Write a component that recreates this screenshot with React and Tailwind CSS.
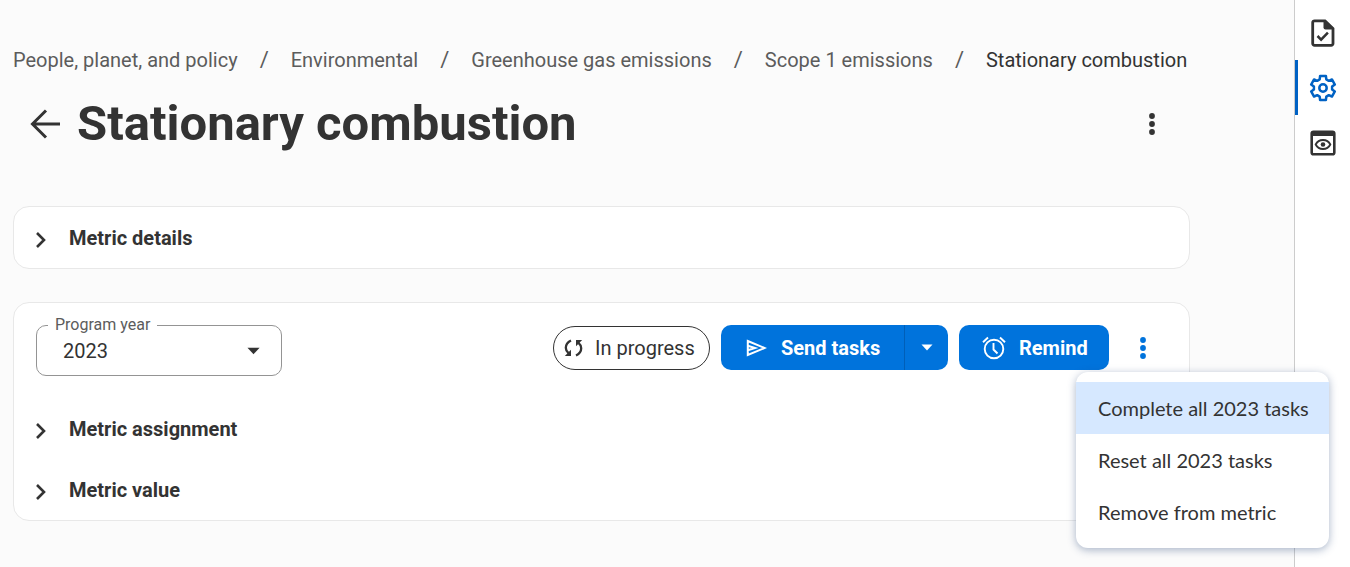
import React from "react";

const trail = ["People, planet, and policy", "Environmental", "Greenhouse gas emissions", "Scope 1 emissions"];
const menuItems = ["Complete all 2023 tasks", "Reset all 2023 tasks", "Remove from metric"];

function Kebab() {
  return (
    <svg width="8" height="24" viewBox="0 0 8 24" fill="currentColor" aria-hidden="true">
      <circle cx="4" cy="4" r="2.9" />
      <circle cx="4" cy="12" r="2.9" />
      <circle cx="4" cy="20" r="2.9" />
    </svg>
  );
}

function Caret() {
  return (
    <svg width="14" height="8" viewBox="0 0 14 8" fill="currentColor" aria-hidden="true">
      <path d="M0.5 0.5h13L7 7.5z" />
    </svg>
  );
}

function Section({ title }) {
  return (
    <h2>
      <button type="button" aria-expanded="false" className="flex h-[61px] w-full items-center gap-[23px] px-[22px] text-left text-[20px] leading-6 font-bold">
        <svg className="mt-1" width="10" height="16" viewBox="0 0 10 16" fill="none" stroke="currentColor" strokeWidth="2.6" aria-hidden="true">
          <path d="M1 1l7 7-7 7" />
        </svg>
        {title}
      </button>
    </h2>
  );
}

function TaskIcon() {
  return (
    <svg width="24" height="28" viewBox="0 0 24 28" fill="none" aria-hidden="true">
      <path d="M3.500 1.800h10.500L22 9.500v15a1.800 1.800 0 0 1-1.800 1.800H3.500a1.800 1.800 0 0 1-1.800-1.800V3.600A1.800 1.800 0 0 1 3.500 1.800z" stroke="currentColor" strokeWidth="2.800" />
      <path d="M12.500 1.500h2.500L22.500 9v1.500h-8a2 2 0 0 1-2-2z" fill="currentColor" />
      <path d="M6.500 17l3.600 3.600 6.800-7" stroke="currentColor" strokeWidth="2.500" />
    </svg>
  );
}

function GearIcon() {
  return (
    <svg width="28" height="28" viewBox="-14 -14 28 28" fill="none" stroke="currentColor" strokeWidth="2.500" strokeLinejoin="round" aria-hidden="true">
      <path d="M-3.300-8.600L-2.900-12H2.900L3.300-8.600L5.800-7.160L8.940-8.510L11.840-3.490L9.100-1.440V1.440L11.840 3.490L8.940 8.510L5.800 7.160L3.300 8.600L2.900 12H-2.900L-3.300 8.600L-5.800 7.160L-8.940 8.510L-11.840 3.490L-9.100 1.440V-1.440L-11.840-3.490L-8.940-8.510L-5.800-7.160z" />
      <circle r="3.700" />
    </svg>
  );
}

function PreviewIcon() {
  return (
    <svg width="26" height="26" viewBox="0 0 26 26" fill="none" stroke="currentColor" aria-hidden="true">
      <rect x="1.700" y="1.700" width="22.600" height="22.600" rx="1.800" strokeWidth="2.600" />
      <path d="M1.500 2.500h23v3.500h-23z" fill="currentColor" stroke="none" />
      <path d="M5.700 14.500c1.500-3 4.200-4.500 7.300-4.500s5.800 1.500 7.300 4.500c-1.500 3-4.200 4.500-7.300 4.500s-5.800-1.500-7.300-4.500z" strokeWidth="1.900" />
      <circle cx="13" cy="14.500" r="2.300" fill="currentColor" stroke="none" />
    </svg>
  );
}

export default function App() {
  return (
    <div className="flex min-h-screen bg-white font-['Roboto',sans-serif] text-[#333333]">
      <main className="min-w-0 flex-1 bg-[#fbfbfb] pt-11 pr-[104px] pb-10 pl-[13px]">
        <nav aria-label="Breadcrumb">
          <ol className="flex h-8 items-center whitespace-nowrap text-[20px] leading-8">
            {trail.map((t) => (
              <li key={t} className="flex items-center text-[#5c5c5c]">
                <a href="#">{t}</a>
                <span aria-hidden="true" className="px-[22px] text-[22px]">/</span>
              </li>
            ))}
            <li aria-current="page">Stationary combustion</li>
          </ol>
        </nav>

        <header className="mt-5 flex h-14 items-center pr-[34px] pl-[17px]">
          <button type="button" aria-label="Back">
            <svg width="31" height="30" viewBox="0 0 31 30" fill="none" stroke="currentColor" strokeWidth="3" aria-hidden="true">
              <path d="M30 15H3M16 1.500L2.500 15 16 28.500" />
            </svg>
          </button>
          <h1 className="ml-4 text-[49px] leading-[56px] font-bold">Stationary combustion</h1>
          <button type="button" aria-label="Page actions" className="ml-auto">
            <Kebab />
          </button>
        </header>

        <section className="mt-[54px] rounded-2xl border border-[#e8e8e8] bg-white">
          <Section title="Metric details" />
        </section>

        <section className="mt-[33px] rounded-2xl border border-[#e8e8e8] bg-white pt-3">
          <div className="mb-[22px] flex items-start justify-between pr-[42px] pl-[22px]">
            <fieldset className="w-[246px] rounded-[10px] border border-[#949494] pb-2">
              <legend className="ml-[11px] px-[7px] text-[16px] leading-5 text-[#5c5c5c]">
                <label htmlFor="program-year">Program year</label>
              </legend>
              <div className="flex items-center pr-[21px]">
                <select id="program-year" defaultValue="2023" className="h-8 w-full appearance-none bg-transparent pl-[26px] text-[20px]">
                  <option>2023</option>
                  <option>2022</option>
                </select>
                <Caret />
              </div>
            </fieldset>

            <div className="flex items-center pt-[10px]">
              <div className="flex h-11 w-[157px] items-center gap-3 rounded-full border border-[#333333] pl-[10px] text-[20px]">
                <svg width="19" height="18" viewBox="0 0 19 18" fill="none" stroke="currentColor" strokeWidth="2.300" aria-hidden="true">
                  <path d="M7 1.500C4 3 1.800 5.500 1.800 8.800c0 2 1 4 2.700 5.400" />
                  <path d="M0.800 17h6.200v-6.200z" fill="currentColor" stroke="none" />
                  <path d="M12 16.500c3-1.500 5.200-4 5.200-7.300 0-2-1-4-2.700-5.400" />
                  <path d="M18.200 1h-6.200v6.200z" fill="currentColor" stroke="none" />
                </svg>
                <span className="whitespace-nowrap">In progress</span>
              </div>

              <div className="ml-[11px] flex h-[45px] overflow-hidden rounded-[10px] bg-[#0073dc] text-white">
                <button type="button" className="flex w-[183px] items-center gap-[14px] pl-[25px] text-[20px] font-bold whitespace-nowrap">
                  <svg width="21" height="18" viewBox="0 0 21 18" fill="none" stroke="currentColor" strokeWidth="2" aria-hidden="true">
                    <path d="M1.800 2L18.500 9 1.800 16V2zM1.800 6.800L9 9l-7.200 2.200" />
                  </svg>
                  Send tasks
                </button>
                <button type="button" aria-label="More send options" className="flex w-11 items-center justify-center border-l border-[#005fb8]">
                  <svg width="12" height="7" viewBox="0 0 12 7" fill="currentColor" aria-hidden="true">
                    <path d="M0.500 0.500h11L6 6.500z" />
                  </svg>
                </button>
              </div>

              <button type="button" className="ml-[11px] flex h-[45px] w-[150px] items-center gap-[13px] rounded-[10px] bg-[#0073dc] pl-[23px] text-[20px] font-bold text-white">
                <svg width="24" height="24" viewBox="0 0 24 24" fill="none" stroke="currentColor" strokeWidth="1.900" aria-hidden="true">
                  <circle cx="12" cy="13" r="9.300" />
                  <path d="M11.500 7v6.500l4 4M1 6.200l5-4.700M23 6.200l-5-4.700" />
                </svg>
                Remind
              </button>

              <div className="relative ml-[30px] flex">
                <button type="button" aria-label="Task actions" aria-haspopup="menu" aria-expanded="true" className="text-[#0073dc]">
                  <Kebab />
                </button>
                <ul role="menu" className="absolute top-[36px] -right-[182px] z-10 w-[253px] rounded-xl bg-white py-[10px] font-['Lato',sans-serif] text-[20px] shadow-[0_2px_8px_rgba(40,70,120,0.4)]">
                  {menuItems.map((item) => (
                    <li key={item} role="none">
                      <button type="button" role="menuitem" className="h-[52px] w-full pl-[22px] text-left whitespace-nowrap data-[active=true]:bg-[#d6e8ff]" data-active={item === menuItems[0]}>
                        {item}
                      </button>
                    </li>
                  ))}
                </ul>
              </div>
            </div>
          </div>
          <Section title="Metric assignment" />
          <Section title="Metric value" />
        </section>
      </main>

      <aside className="w-14 border-l border-[#cccccc] bg-white pt-[5px]">
        <nav aria-label="Panels" className="flex flex-col">
          <button type="button" aria-label="Tasks" className="flex h-[55px] items-center justify-center"><TaskIcon /></button>
          <button type="button" aria-label="Settings" aria-pressed="true" className="flex h-[55px] items-center justify-center border-l-3 border-[#0062c4] pr-[3px] text-[#0062c4]"><GearIcon /></button>
          <button type="button" aria-label="Preview" className="flex h-[55px] items-center justify-center"><PreviewIcon /></button>
        </nav>
      </aside>
    </div>
  );
}
